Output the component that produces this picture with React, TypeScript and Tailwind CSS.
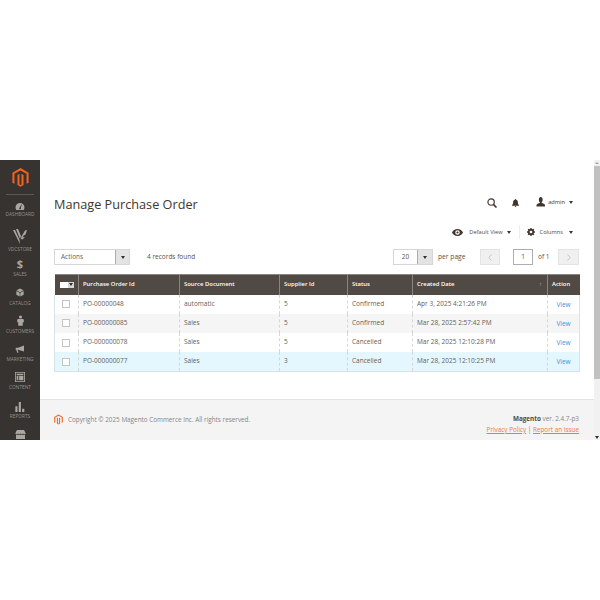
const navItems = [
  { label: 'DASHBOARD', icon: 'gauge', h: 'h-[18px]' },
  { label: 'VDCSTORE', icon: 'vdc', h: 'h-[35px]' },
  { label: 'SALES', icon: 'dollar', h: 'h-[25px]' },
  { label: 'CATALOG', icon: 'box', h: 'h-[29px]' },
  { label: 'CUSTOMERS', icon: 'person', h: 'h-[28px]' },
  { label: 'MARKETING', icon: 'mega', h: 'h-[28px]' },
  { label: 'CONTENT', icon: 'content', h: 'h-[28px]' },
  { label: 'REPORTS', icon: 'bars', h: 'h-[29px]' },
]

const rows = [
  { id: 'PO-00000048', source: 'automatic', supplier: '5', status: 'Confirmed', date: 'Apr 3, 2025 4:21:26 PM', bg: 'bg-white' },
  { id: 'PO-000000085', source: 'Sales', supplier: '5', status: 'Confirmed', date: 'Mar 28, 2025 2:57:42 PM', bg: 'bg-[#f5f5f5]' },
  { id: 'PO-000000078', source: 'Sales', supplier: '5', status: 'Cancelled', date: 'Mar 28, 2025 12:10:28 PM', bg: 'bg-white' },
  { id: 'PO-000000077', source: 'Sales', supplier: '3', status: 'Cancelled', date: 'Mar 28, 2025 12:10:25 PM', bg: 'bg-[#e5f7fe]' },
]

function MageLogo({ className }: { className: string }) {
  return (
    <svg className={className} viewBox="0 0 24 27" fill="#f26322">
      <path d="M12 0 23.5 6.6V20.8L20.6 22.5V8.3L12 3.4 3.4 8.3V22.5L.5 20.8V6.6Z" />
      <path d="M13.4 23.3 12 24.1 10.6 23.3V8.3L7.7 10V24.2L12 26.7 16.3 24.2V10L13.4 8.3Z" />
    </svg>
  )
}

function NavIcon({ name }: { name: string }) {
  const c = 'text-[#aaa6a0]'
  if (name === 'dollar') return <span className="text-[11px] leading-[12px] font-bold text-[#aaa6a0]">$</span>
  if (name === 'gauge') return (
    <svg className={`w-[10px] h-[7px] ${c}`} viewBox="0 0 24 18" fill="currentColor">
      <path d="M12 0A11.500 11.500 0 0 0 .5 11.500c0 2.400.7 4.600 2 6.500h19c1.300-1.900 2-4.100 2-6.500A11.500 11.500 0 0 0 12 0Z" />
      <path d="M11 13 15 4l1.500.7-3.200 9.300Z" fill="#373330" />
      <circle cx="12" cy="14" r="2.200" fill="#373330" />
    </svg>
  )
  if (name === 'vdc') return (
    <svg className={`w-[14px] h-[15px] mb-[1px] ${c}`} viewBox="0 0 28 30" fill="currentColor">
      <path d="M0 2h4l9 20 1 8Z" />
      <path d="M6 0h4l6 14-2 6Z" />
      <path d="M17 15 24 3l4-1-3 9-5 3 1 3 3-1-5 5-3-1Z" />
    </svg>
  )
  if (name === 'box') return (
    <svg className={`w-[8px] h-[9px] mb-[2px] ${c}`} viewBox="0 0 24 26" fill="currentColor">
      <path d="M12 1 22.500 6.500 12 12 1.500 6.500Z" />
      <path d="M1 8.500 11 13.700V25L1 19.500Z" />
      <path d="M23 8.500 13 13.700V25L23 19.500Z" />
    </svg>
  )
  if (name === 'person') return (
    <svg className={`w-[7px] h-[11px] mb-[1px] ${c}`} viewBox="0 0 20 30" fill="currentColor">
      <circle cx="10" cy="5" r="4.500" />
      <path d="M4 10.500h12c2 0 3.500 1.500 3.500 3.500v6h-3v10h-13V20h-3v-6c0-2 1.500-3.500 3.500-3.500Z" />
    </svg>
  )
  if (name === 'mega') return (
    <svg className={`w-[10px] h-[8px] mb-[2px] ${c}`} viewBox="0 0 30 26" fill="currentColor">
      <path d="M1 9h8L28 1.500V21L9 15.500H7.500L10 25H6L3 15.500H1Z" />
    </svg>
  )
  if (name === 'content') return (
    <svg className={`w-[10px] h-[10px] mb-[1px] ${c}`} viewBox="0 0 30 30" fill="currentColor">
      <path fillRule="evenodd" d="M0 0h30v30H0ZM2.500 2.500v25h25v-25Z" />
      <path fillRule="evenodd" d="M5 5h20v5H5ZM5 12h5v13H5ZM12.500 12H25v13H12.500Z" />
    </svg>
  )
  if (name === 'bars') return (
    <svg className={`w-[10px] h-[10px] ${c}`} viewBox="0 0 28 28" fill="currentColor">
      <rect x="1" y="12" width="6" height="16" />
      <rect x="10.500" y="0" width="6" height="28" />
      <rect x="20" y="19" width="6" height="9" />
    </svg>
  )
  return (
    <svg className={`w-[11px] h-[9px] ${c}`} viewBox="0 0 32 28" fill="currentColor">
      <path d="M5 0h22l5 10c0 2.500-2 3.500-4 3.500S25 12.500 24 11c-1 1.500-2.500 2.500-4 2.500S17 12.500 16 11c-1 1.500-2.500 2.500-4 2.500S9 12.500 8 11c-1 1.500-2 2.500-4 2.500S0 12.500 0 10Z" />
      <path d="M2 15h28v13H2Z" />
    </svg>
  )
}

function Caret({ className = 'border-t-[#303030]' }: { className?: string }) {
  return <span className={`inline-block w-0 h-0 border-x-[2px] border-x-transparent border-t-[3px] ${className}`} />
}

export default function App() {
  return (
    <div className="h-[600px] w-[600px] bg-white flex items-center overflow-hidden font-['Open_Sans',sans-serif] text-[#41362f]">
      <div className="h-[280px] w-full flex">
        {/* menu */}
        <aside className="w-10 h-full bg-[#373330] flex flex-col items-center overflow-hidden shrink-0">
          <MageLogo className="w-[17px] h-[19px] mt-[8px] shrink-0" />
          <div className="w-[28px] h-px bg-[#5a5550] mt-[7px] mb-[5px] shrink-0" />
          {navItems.map(n => (
            <div key={n.label} className={`${n.h} w-full flex flex-col items-center justify-end shrink-0`}>
              <NavIcon name={n.icon} />
              <span className="text-[4.800px] leading-[8px] text-[#96928d] whitespace-nowrap">{n.label}</span>
            </div>
          ))}
          <div className="mt-[10px] shrink-0"><NavIcon name="store" /></div>
        </aside>

        {/* page */}
        <main className="flex-1 min-w-0 flex flex-col">
          <div className="pl-[14px] pr-[15px]">
            <div className="pt-[34px] h-[54px] flex justify-between">
              <h1 className="text-[12.700px] leading-[20px] font-normal text-[#41362f]">Manage Purchase Order</h1>
              <div className="flex items-start pr-[6px] pt-[1px]">
                <svg className="w-[10px] h-[10px] mt-[3px]" viewBox="0 0 22 22" fill="none" stroke="#41362f" strokeWidth="2.600">
                  <circle cx="9" cy="9" r="7" /><path d="m14 14 7 7" strokeWidth="3.500" />
                </svg>
                <svg className="w-[7px] h-[8px] mt-[4px] ml-[15px]" viewBox="0 0 16 18" fill="#41362f">
                  <path d="M8 0c1 0 1.500.7 1.500 1.500C12 2.200 13.500 4.500 13.500 7.500c0 3 .7 5 2.500 6.500v1H0v-1c1.800-1.500 2.500-3.500 2.500-6.500S4 2.200 6.500 1.500C6.500.7 7 0 8 0ZM6 16h4c0 1-.8 2-2 2s-2-1-2-2Z" />
                </svg>
                <div className="flex items-center ml-[17px] h-[14px]">
                  <svg className="w-[9.500px] h-[9.500px]" viewBox="0 0 18 20" fill="#41362f">
                    <path d="M9 0c2.500 0 4 2 4 5s-1 5-2 6v1.500c3 1 7 2 7 5V20H0v-2.500c0-3 4-4 7-5V11C6 10 5 8 5 5s1.500-5 4-5Z" />
                  </svg>
                  <span className="text-[5.700px] leading-[8px] ml-[3px]">admin</span>
                  <Caret className="border-t-[#41362f] ml-[4px]" />
                </div>
              </div>
            </div>
            <div className="mt-[10px] h-[16px] flex justify-end items-center text-[5.700px] text-[#514943] pr-[6px]">
              <svg className="w-[11px] h-[7px] mr-[6px]" viewBox="0 0 22 14" fill="#41362f">
                <path fillRule="evenodd" d="M11 0c5 0 9 3 11 7-2 4-6 7-11 7S2 11 0 7c2-4 6-7 11-7Zm0 2.500a4.500 4.500 0 1 0 0 9 4.500 4.500 0 0 0 0-9Zm0 2.300a2.200 2.200 0 1 1 0 4.400 2.200 2.200 0 0 1 0-4.400Z" />
              </svg>
              <span>Default View</span>
              <Caret className="border-t-[#41362f] ml-[4px]" />
              <div className="w-px h-[14px] bg-[#eeeeee] ml-[8px] mr-[7px]" />
              <svg className="w-[8px] h-[8px] mr-[5px]" viewBox="0 0 18 18" fill="#41362f">
                <path fillRule="evenodd" d="M7.500 0h3l.4 2.300 1.500.6 2-1.300 2.100 2.100-1.300 2 .6 1.500 2.200.3v3l-2.300.4-.6 1.500 1.300 2-2.100 2.100-2-1.300-1.500.6-.3 2.200h-3l-.4-2.300-1.500-.6-2 1.300-2.100-2.100 1.300-2-.6-1.500L0 10.500v-3l2.300-.4.600-1.500-1.300-2L3.700 1.500l2 1.300 1.500-.6ZM9 6a3 3 0 1 0 0 6 3 3 0 0 0 0-6Z" />
              </svg>
              <span>Columns</span>
              <Caret className="border-t-[#41362f] ml-[6px]" />
            </div>
            <div className="mt-[9px] h-[16px] flex items-center text-[6.500px] text-[#5b524c]">
              <div className="w-[76px] h-[16px] flex border border-[#d6d6d6] bg-white">
                <span className="flex-1 pl-[6px] leading-[14px] text-[#6a625c]">Actions</span>
                <span className="w-[14px] bg-[#e3e3e3] border-l border-[#adadad] flex items-center justify-center"><Caret /></span>
              </div>
              <span className="ml-[17px]">4 records found</span>
              <div className="ml-auto flex items-center">
                <div className="w-[40px] h-[16px] flex border border-[#d6d6d6] bg-white">
                  <span className="flex-1 text-center leading-[14px]">20</span>
                  <span className="w-[15px] bg-[#e3e3e3] border-l border-[#adadad] flex items-center justify-center"><Caret /></span>
                </div>
                <span className="ml-[5px] w-[42px] text-[6.700px]">per page</span>
                <div className="w-[20px] h-[16px] bg-[#f0f0f0] border border-[#e3e3e3] flex items-center justify-center">
                  <svg className="w-[4px] h-[7px]" viewBox="0 0 4 7" fill="none" stroke="#c4c4c4"><path d="M3.500.5.800 3.500l2.700 3" /></svg>
                </div>
                <div className="ml-[13px] w-[20px] h-[16px] border border-[#adadad] bg-white text-center leading-[14px]">1</div>
                <span className="ml-[5px] w-[20px]">of 1</span>
                <div className="w-[21px] h-[16px] bg-[#f0f0f0] border border-[#e3e3e3] flex items-center justify-center">
                  <svg className="w-[4px] h-[7px]" viewBox="0 0 4 7" fill="none" stroke="#c4c4c4"><path d="M.5.5l2.700 3-2.700 3" /></svg>
                </div>
              </div>
            </div>

            <table className="mt-[9px] w-full table-fixed border-collapse text-[6.500px] text-[#655d57]">
              <colgroup>
                <col className="w-[24px]" /><col className="w-[101px]" /><col className="w-[100px]" /><col className="w-[68px]" />
                <col className="w-[65px]" /><col className="w-[135px]" /><col className="w-[32px]" />
              </colgroup>
              <thead>
                <tr className="h-[20px] bg-[#514943] text-white text-[5.900px] text-left border-t border-[#8a837e]">
                  <th className="border-r border-[#8a837e]">
                    <div className="ml-[5px] w-[14px] h-[6px] bg-white flex">
                      <span className="w-[8px]" />
                      <span className="w-[6px] bg-[#d6d6d6] flex items-center justify-center"><Caret /></span>
                    </div>
                  </th>
                  <th className="pl-[4px] pb-[1px] font-semibold border-r border-[#8a837e]">Purchase Order Id</th>
                  <th className="pl-[4px] pb-[1px] font-semibold border-r border-[#8a837e]">Source Document</th>
                  <th className="pl-[4px] pb-[1px] font-semibold border-r border-[#8a837e]">Supplier Id</th>
                  <th className="pl-[4px] pb-[1px] font-semibold border-r border-[#8a837e]">Status</th>
                  <th className="pl-[4px] pb-[1px] font-semibold border-r border-[#8a837e]">
                    <div className="flex justify-between pr-[5px]"><span>Created Date</span><span className="text-[#c9c5c2]">↑</span></div>
                  </th>
                  <th className="pl-[4px] pb-[1px] font-semibold">Action</th>
                </tr>
              </thead>
              <tbody className="border-x border-b border-[#d6e3ea]">
                {rows.map(r => (
                  <tr key={r.id} className={`h-[19.300px] ${r.bg}`}>
                    <td className="border-r border-dashed border-[#d6d6d6]">
                      <div className="ml-[7px] w-[8px] h-[8px] border border-[#c4c4c4] bg-white" />
                    </td>
                    <td className="pl-[4px] pb-[1px] border-r border-dashed border-[#d6d6d6]">{r.id}</td>
                    <td className="pl-[4px] pb-[1px] border-r border-dashed border-[#d6d6d6]">{r.source}</td>
                    <td className="pl-[4px] pb-[1px] border-r border-dashed border-[#d6d6d6]">{r.supplier}</td>
                    <td className="pl-[4px] pb-[1px] border-r border-dashed border-[#d6d6d6]">{r.status}</td>
                    <td className="pl-[4px] pb-[1px] border-r border-dashed border-[#d6d6d6]">{r.date}</td>
                    <td className="text-center text-[#3c93dd] pt-[1px]">View</td>
                  </tr>
                ))}
              </tbody>
            </table>
          </div>

          <footer className="mt-auto h-[41px] bg-[#f4f4f4] border-t border-[#e3e3e3] pl-[14px] pr-[15px] flex justify-between items-start pt-[14px]">
            <div className="flex items-center">
              <MageLogo className="w-[9px] h-[11px]" />
              <span className="ml-[5px] text-[6.350px] text-[#858585]">Copyright © 2025 Magento Commerce Inc. All rights reserved.</span>
            </div>
            <div className="text-right text-[6.350px] leading-[11px] -mt-[1px] text-[#858585]">
              <div><span className="font-bold text-[#514943]">Magento</span> ver. 2.4.7-p3</div>
              <div><span className="text-[#ef7a3f] underline">Privacy Policy</span> | <span className="text-[#ef7a3f] underline">Report an Issue</span></div>
            </div>
          </footer>
        </main>

        {/* scrollbar */}
        <div className="w-[6px] h-full bg-[#f1f1f1] flex flex-col items-center shrink-0">
          <span className="h-[6px] flex items-center"><span className="w-0 h-0 border-x-[2px] border-x-transparent border-b-[2px] border-b-[#a3a3a3]" /></span>
          <div className="w-full h-[213px] bg-[#c1c1c1]" />
          <span className="mt-auto h-[6px] flex items-center"><Caret /></span>
        </div>
      </div>
    </div>
  )
}
